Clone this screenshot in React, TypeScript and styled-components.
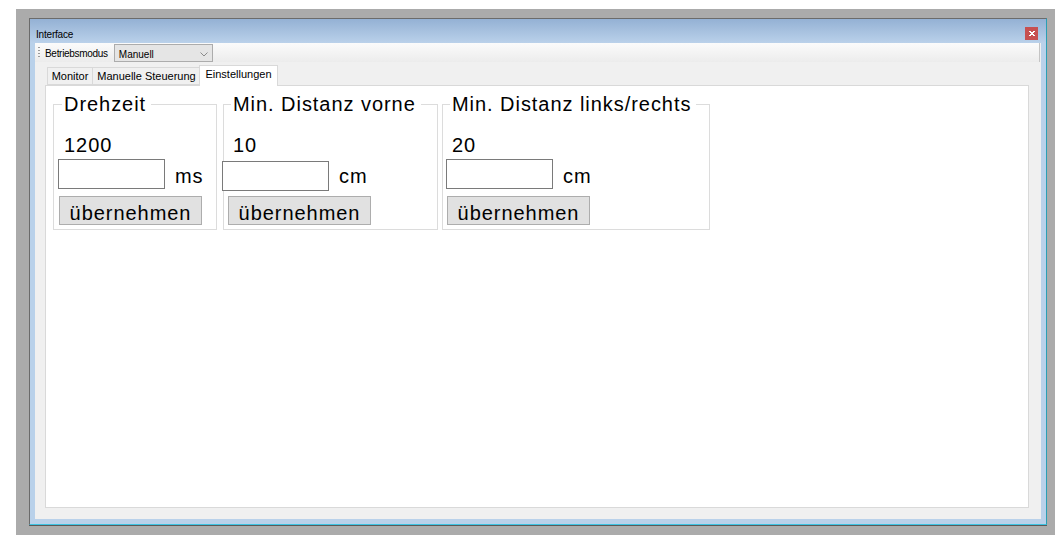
import React from "react";
import styled, { createGlobalStyle } from "styled-components";

const GlobalStyle = createGlobalStyle`
  html, body { margin: 0; padding: 0; background: #ffffff; }
  body { font-family: "Liberation Sans", Arial, sans-serif; color: #000; }
  * { box-sizing: border-box; }
`;

const Page = styled.div`
  padding: 9px 0 0 16px;
`;

const Desktop = styled.div`
  width: 1039px;
  height: 526px;
  background: #ababab;
  padding: 9px 8px 10px 13px;
  display: flex;
`;

const Window = styled.div`
  flex: 1;
  display: flex;
  flex-direction: column;
  background: #b9d1ea;
  border-top: 1px solid #6b6b6b;
  border-left: 1px solid #6b6b6b;
  border-right: 1px solid #2a9fb4;
  border-bottom: 1px solid #3cc3e2;
  box-shadow: 0 1px 0 #5a5a5a;
  padding: 0 5px 5px;
`;

const TitleBar = styled.div`
  height: 24px;
  margin: 0 -5px;
  padding: 8px 8px 0 6px;
  display: flex;
  align-items: flex-start;
  justify-content: space-between;
  background: linear-gradient(#94b1d4, #bad1ea);
`;

const Title = styled.span`
  font-size: 10px;
  line-height: 12px;
  letter-spacing: -0.2px;
  padding-top: 2px;
`;

const CloseButton = styled.div`
  width: 13px;
  height: 13px;
  background: #c75050;
  display: flex;
  align-items: center;
  justify-content: center;
`;

const Content = styled.div`
  flex: 1;
  display: flex;
  flex-direction: column;
  background: #f0f0f0;
`;

const Toolbar = styled.div`
  height: 19px;
  display: flex;
  align-items: center;
  padding-left: 3px;
  margin-right: 1px;
  background: linear-gradient(#fbfbfb, #ececec);
  border-right: 1px solid #c4c4c4;
`;

const Grip = styled.div`
  width: 2px;
  height: 11px;
  background: repeating-linear-gradient(#9a9a9a 0 1px, transparent 1px 3px);
`;

const ToolLabel = styled.span`
  margin-left: 5px;
  font-size: 10px;
  line-height: 12px;
  letter-spacing: -0.3px;
  padding-top: 2px;
`;

const Combo = styled.div`
  width: 99px;
  height: 18px;
  margin-left: 6px;
  align-self: flex-start;
  margin-top: 1px;
  background: #e5e5e5;
  border: 1px solid #acacac;
  display: flex;
  align-items: center;
  justify-content: space-between;
  padding: 2px 4px 0 4px;
  font-size: 10px;
`;

const TabControl = styled.div`
  flex: 1;
  display: flex;
  flex-direction: column;
  margin: 3px 12px 11px 10px;
`;

const TabStrip = styled.div`
  height: 20px;
  display: flex;
  align-items: flex-end;
  padding-left: 2px;
  position: relative;
  z-index: 1;
`;

const Tab = styled.div<{ $w: number; $active?: boolean; $shift?: number }>`
  width: ${(p) => p.$w}px;
  height: ${(p) => (p.$active ? 21 : 18)}px;
  margin-left: ${(p) => p.$shift ?? 0}px;
  margin-bottom: ${(p) => (p.$active ? -1 : 0)}px;
  border: 1px solid #d9d9d9;
  border-bottom: ${(p) => (p.$active ? "none" : "1px solid #d9d9d9")};
  background: ${(p) => (p.$active ? "#ffffff" : "#f0f0f0")};
  font-size: 11px;
  line-height: 13px;
  padding-top: 2px;
  text-align: center;
  white-space: nowrap;
`;

const Panel = styled.div`
  flex: 1;
  background: #ffffff;
  border: 1px solid #d9d9d9;
  padding: 7px;
  display: flex;
  align-items: flex-start;
`;

const bigFont = `
  font-size: 20px;
  letter-spacing: 0.95px;
  line-height: 22px;
`;

const GroupBox = styled.fieldset<{ $w: number; $gap: number }>`
  width: ${(p) => p.$w}px;
  margin: 0 0 0 ${(p) => p.$gap}px;
  padding: 0 0 4px 0;
  min-width: 0;
  border: 1px solid #dcdcdc;
`;

const Legend = styled.legend<{ $inset: number }>`
  margin-left: ${(p) => p.$inset - 2}px;
  padding: 0 5px 0 2px;
  ${bigFont}
`;

const Value = styled.div<{ $inset: number }>`
  margin-top: 19px;
  padding-left: ${(p) => p.$inset}px;
  ${bigFont}
`;

const InputRow = styled.div`
  height: 30px;
  margin-top: 3px;
  display: flex;
  align-items: flex-start;
`;

const TextInput = styled.input<{ $x: number; $y: number }>`
  width: 107px;
  height: 30px;
  flex: none;
  margin: ${(p) => p.$y}px 0 0 ${(p) => p.$x}px;
  border: 1px solid #7a7a7a;
  background: #ffffff;
  padding: 0 3px;
  ${bigFont}
  font-family: inherit;
  outline: none;
`;

const Unit = styled.span`
  margin: 6px 0 0 10px;
  ${bigFont}
`;

const ApplyButton = styled.button<{ $x: number }>`
  display: block;
  width: 143px;
  height: 29px;
  margin: 7px 0 0 ${(p) => p.$x}px;
  padding: 4px 0 0;
  text-align: center;
  background: #e1e1e1;
  border: 1px solid #adadad;
  border-radius: 0;
  color: #000;
  font-family: inherit;
  ${bigFont}
`;

type Group = {
  title: string;
  value: string;
  unit: string;
  width: number;
  gap: number;
  inset: number;
  inputX: number;
  inputY: number;
  buttonX: number;
};

const groups: Group[] = [
  { title: "Drehzeit", value: "1200", unit: "ms", width: 164, gap: 0, inset: 10, inputX: 4, inputY: 0, buttonX: 5 },
  { title: "Min. Distanz vorne", value: "10", unit: "cm", width: 215, gap: 6, inset: 9, inputX: -2, inputY: 2, buttonX: 4 },
  { title: "Min. Distanz links/rechts", value: "20", unit: "cm", width: 268, gap: 4, inset: 9, inputX: 3, inputY: 0, buttonX: 4 },
];

export default function App() {
  return (
    <>
      <GlobalStyle />
      <Page>
        <Desktop>
          <Window>
            <TitleBar>
              <Title>Interface</Title>
              <CloseButton>
                <svg width="6" height="6" viewBox="0 0 6 6" shapeRendering="crispEdges">
                  <path d="M0 0h2v1h2V0h2v1H5v1H4v1h1v1h1v1H4V4H2v1H0V4h1V3h1V2H1V1H0z" fill="#ffffff" />
                </svg>
              </CloseButton>
            </TitleBar>
            <Content>
              <Toolbar>
                <Grip />
                <ToolLabel>Betriebsmodus</ToolLabel>
                <Combo>
                  <span>Manuell</span>
                  <svg width="8" height="5" viewBox="0 0 8 5">
                    <path d="M0.5 0.5 L4 4 L7.5 0.5" fill="none" stroke="#8a8a8a" strokeWidth="1" />
                  </svg>
                </Combo>
              </Toolbar>
              <TabControl>
                <TabStrip>
                  <Tab $w={46}>Monitor</Tab>
                  <Tab $w={109} $shift={-1}>Manuelle Steuerung</Tab>
                  <Tab $w={79} $shift={-2} $active>Einstellungen</Tab>
                </TabStrip>
                <Panel>
                  {groups.map((g) => (
                    <GroupBox key={g.title} $w={g.width} $gap={g.gap}>
                      <Legend $inset={g.inset}>{g.title}</Legend>
                      <Value $inset={g.inset}>{g.value}</Value>
                      <InputRow>
                        <TextInput $x={g.inputX} $y={g.inputY} />
                        <Unit>{g.unit}</Unit>
                      </InputRow>
                      <ApplyButton $x={g.buttonX}>übernehmen</ApplyButton>
                    </GroupBox>
                  ))}
                </Panel>
              </TabControl>
            </Content>
          </Window>
        </Desktop>
      </Page>
    </>
  );
}
